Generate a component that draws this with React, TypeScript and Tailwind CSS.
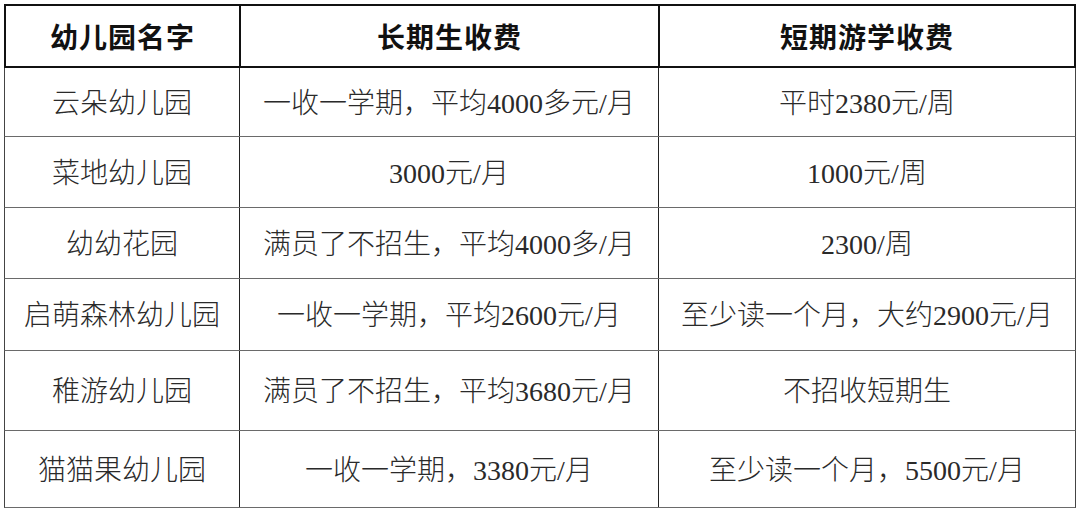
import React from "react";

const rows: { h: string; c: [string, string, string] }[] = [
  { h: "h-[69px]", c: ["云朵幼儿园", "一收一学期，平均4000多元/月", "平时2380元/周"] },
  { h: "h-[71px]", c: ["菜地幼儿园", "3000元/月", "1000元/周"] },
  { h: "h-[71px]", c: ["幼幼花园", "满员了不招生，平均4000多/月", "2300/周"] },
  { h: "h-[72px]", c: ["启萌森林幼儿园", "一收一学期，平均2600元/月", "至少读一个月，大约2900元/月"] },
  { h: "h-[80px]", c: ["稚游幼儿园", "满员了不招生，平均3680元/月", "不招收短期生"] },
  { h: "h-[77px]", c: ["猫猫果幼儿园", "一收一学期，3380元/月", "至少读一个月，5500元/月"] },
];

export default function App() {
  return (
    <div className="w-[1080px] h-[511px] bg-white pl-[4px] pt-[4px] overflow-hidden">
      <div className="w-[1072px]">
        <div className="grid grid-cols-[235px_419px_1fr] h-[64px] border-2 border-[#111] text-[28px] font-bold tracking-[1px] text-[#111] [font-family:'Noto_Sans_CJK_SC',sans-serif]">
          <div className="flex items-center justify-center border-r-2 border-[#111]">幼儿园名字</div>
          <div className="flex items-center justify-center border-r-2 border-[#111]">长期生收费</div>
          <div className="flex items-center justify-center">短期游学收费</div>
        </div>
        {rows.map((r, i) => (
          <div
            key={i}
            className={`grid grid-cols-[235px_419px_1fr] ${r.h} border-x border-b border-x-[#444] border-b-[#6a6a6a] text-[28px] text-[#2a2a2a] [font-family:'Liberation_Serif','Noto_Sans_CJK_SC',serif] font-light`}
          >
            <div className="flex items-center justify-center pt-[3px] border-r border-[#222]">{r.c[0]}</div>
            <div className="flex items-center justify-center pt-[3px] border-r border-[#222]">{r.c[1]}</div>
            <div className="flex items-center justify-center pt-[3px]">{r.c[2]}</div>
          </div>
        ))}
      </div>
    </div>
  );
}
